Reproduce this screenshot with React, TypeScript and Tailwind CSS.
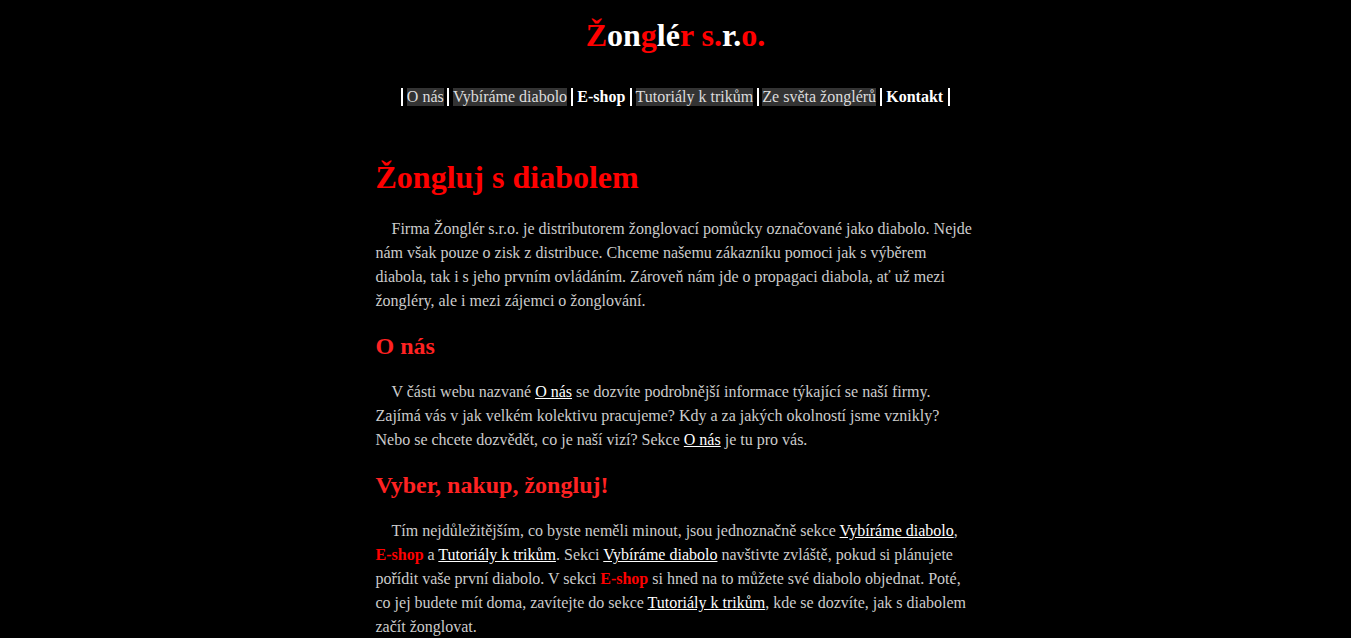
import React from 'react'

const navItems = [
  { label: 'O nás', active: false },
  { label: 'Vybíráme diabolo', active: false },
  { label: 'E-shop', active: true },
  { label: 'Tutoriály k trikům', active: false },
  { label: 'Ze světa žonglérů', active: false },
  { label: 'Kontakt', active: true }
]

function Bar() {
  return <span className="w-[2px] h-[18px] bg-white" />
}

function Link({ children }: { children: React.ReactNode }) {
  return <a href="#" className="text-white underline">{children}</a>
}

function Shop() {
  return <b className="text-[#ff0000]">E-shop</b>
}

export default function App() {
  return (
    <div className="min-h-screen mr-[15px] bg-black font-['Liberation_Serif',serif] text-[#cccccc] pb-4">
      {/* Header */}
      <h1 className="pt-[17px] text-center text-[32px] font-bold leading-[37px]">
        <span className="text-[#ff0000]">Ž</span>
        <span className="text-white">on</span>
        <span className="text-[#ff0000]">g</span>
        <span className="text-white">lé</span>
        <span className="text-[#ff0000]">r s.</span>
        <span className="text-white">r.</span>
        <span className="text-[#ff0000]">o.</span>
      </h1>

      <nav className="mt-[34px] flex justify-center items-center gap-[3.6px] text-base leading-[18px]">
        <Bar />
        {navItems.map((item) => (
          <React.Fragment key={item.label}>
            {item.active ? (
              <span className="font-bold text-white px-[1px]">{item.label}</span>
            ) : (
              <span className="bg-[#333333] text-[#dddddd]">{item.label}</span>
            )}
            <Bar />
          </React.Fragment>
        ))}
      </nav>

      {/* Content */}
      <main className="w-[600px] mx-auto mt-[53px] text-base leading-6">
        <h2 className="text-[32px] font-bold text-[#ff0000] leading-[37px] mb-[21px]">Žongluj s diabolem</h2>
        <p className="indent-4">
          Firma Žonglér s.r.o. je distributorem žonglovací pomůcky označované jako diabolo. Nejde nám však pouze o zisk z distribuce. Chceme našemu zákazníku pomoci jak s výběrem diabola, tak i s jeho prvním ovládáním. Zároveň nám jde o propagaci diabola, ať už mezi žongléry, ale i mezi zájemci o žonglování.
        </p>

        <h3 className="mt-[19px] mb-[20px] text-[24px] font-bold text-[#ff2222] leading-[28px]">O nás</h3>
        <p className="indent-4">
          V části webu nazvané <Link>O nás</Link> se dozvíte podrobnější informace týkající se naší firmy. Zajímá vás v jak velkém kolektivu pracujeme? Kdy a za jakých okolností jsme vznikly? Nebo se chcete dozvědět, co je naší vizí? Sekce <Link>O nás</Link> je tu pro vás.
        </p>

        <h3 className="mt-[19px] mb-[20px] text-[24px] font-bold text-[#ff2222] leading-[28px]">Vyber, nakup, žongluj!</h3>
        <p className="indent-4">
          Tím nejdůležitějším, co byste neměli minout, jsou jednoznačně sekce <Link>Vybíráme diabolo</Link>, <Shop /> a <Link>Tutoriály k trikům</Link>. Sekci <Link>Vybíráme diabolo</Link> navštivte zvláště, pokud si plánujete pořídit vaše první diabolo. V sekci <Shop /> si hned na to můžete své diabolo objednat. Poté, co jej budete mít doma, zavítejte do sekce <Link>Tutoriály k trikům</Link>, kde se dozvíte, jak s diabolem začít žonglovat.
        </p>
      </main>
    </div>
  )
}
